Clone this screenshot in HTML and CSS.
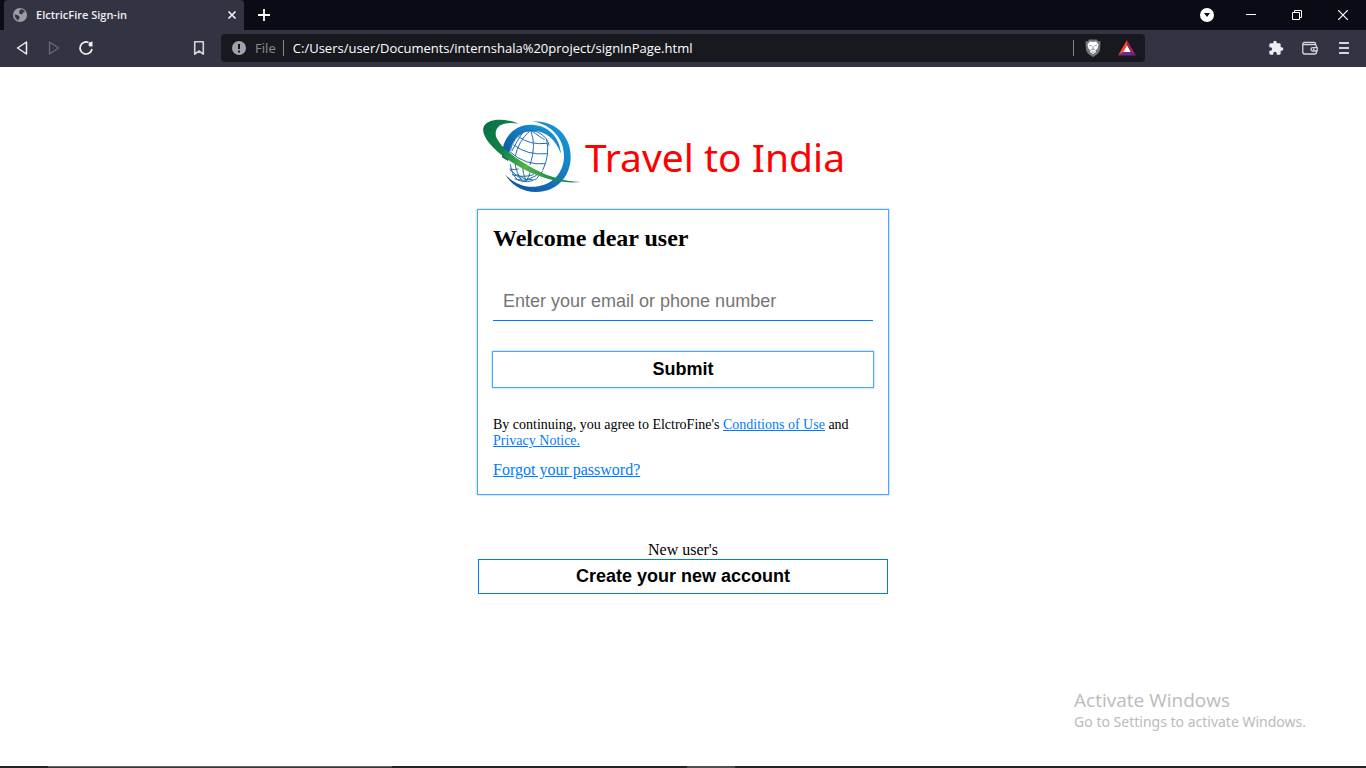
FILE: index.html
```html
<!DOCTYPE html>
<html lang="en">
<head>
<meta charset="utf-8">
<meta name="viewport" content="width=device-width, initial-scale=1">
<title>ElctricFire Sign-in</title>
<link rel="stylesheet" href="styles.css">
</head>
<body>
<header class="browser">
  <div class="tab-strip">
    <div class="tab">
      <svg class="icon-14" viewBox="0 0 14 14" aria-hidden="true"><circle cx="7" cy="7" r="7" fill="#9b9da5"/><path d="M1.500 6.500 4.500 7l2 1.500V10l-1.500 2.500L2.500 10zM7 1.500h3l2 2.500-2 .5-1 2-2-.5L6 4.500z" fill="#323443"/></svg>
      <span class="tab-title">ElctricFire Sign-in</span>
      <button class="plain" aria-label="Close tab"><svg class="icon-10" viewBox="0 0 10 10"><path d="M1.500 1.500l7 7M8.500 1.500l-7 7" stroke="#f0f0f2" stroke-width="1.700"/></svg></button>
    </div>
    <button class="plain new-tab" aria-label="New tab"><svg class="icon-12" viewBox="0 0 12 12"><path d="M6 0v12M0 6h12" stroke="#fff" stroke-width="1.800"/></svg></button>
    <div class="window-controls">
      <button class="plain control" aria-label="Search tabs"><svg class="icon-14" viewBox="0 0 14 14"><circle cx="7" cy="7" r="7" fill="#fff"/><path d="M4 5h6L7 9z" fill="#0b0b15"/></svg></button>
      <button class="plain control" aria-label="Minimize"><svg class="icon-10" viewBox="0 0 10 10"><path d="M0 4.500h10" stroke="#fff"/></svg></button>
      <button class="plain control" aria-label="Restore"><svg class="icon-10" viewBox="0 0 10 10"><path d="M.5 2.500h7v7h-7zM2.500 2.500v-2h7v7h-2" fill="none" stroke="#fff"/></svg></button>
      <button class="plain control" aria-label="Close window"><svg class="icon-10" viewBox="0 0 10 10"><path d="M0 0l10 10M10 0L0 10" stroke="#fff" stroke-width="1.200"/></svg></button>
    </div>
  </div>
  <div class="toolbar">
    <div class="nav">
      <button class="plain" aria-label="Back"><svg class="icon-16" viewBox="0 0 16 16"><path d="M12.500 2v12L3.500 8z" fill="none" stroke="#f0f0f2" stroke-width="1.500" stroke-linejoin="round"/></svg></button>
      <button class="plain" aria-label="Forward"><svg class="icon-16" viewBox="0 0 16 16"><path d="M3.500 2v12l9-6z" fill="none" stroke="#686a76" stroke-width="1.300" stroke-linejoin="round"/></svg></button>
      <button class="plain" aria-label="Reload"><svg class="icon-16" viewBox="0 0 16 16"><path d="M10.500 2.500A6 6 0 1 0 14 9" fill="none" stroke="#f0f0f2" stroke-width="1.700"/><path d="M11 2.500l3.500-1v5h-3q-1.800-1.500-.5-4z" fill="#f0f0f2"/></svg></button>
    </div>
    <button class="plain bookmark" aria-label="Bookmark"><svg class="icon-16" viewBox="0 0 16 16"><path d="M3.700 1.700h8.600v12.500L8 11l-4.300 3.200z" fill="none" stroke="#d5d6da" stroke-width="1.600" stroke-linejoin="round"/></svg></button>
    <div class="address">
      <svg class="icon-14" viewBox="0 0 14 14" aria-hidden="true"><circle cx="7" cy="7" r="7" fill="#a0a3aa"/><path d="M7 3v5M7 9.500v2" stroke="#17191f" stroke-width="2"/></svg>
      <span class="scheme">File</span>
      <input class="url" type="text" aria-label="Address" value="C:/Users/user/Documents/internshala%20project/signInPage.html">
      <span class="divider"></span>
      <button class="plain" aria-label="Shields"><svg class="shield" viewBox="0 0 16 18"><path d="M4 .5h8l1 1.500 2.500.5-.5 8q-.5 4-7 7.500-6.500-3.500-7-7.500l-.5-8L3 2z" fill="#777779"/><path d="M5 2.500l3 .5 3-.5 2.500 3-1 4-2 2 .5 1.500-3 2-3-2 .5-1.500-2-2-1-4z" fill="#fff"/><path d="M4 6l2.500 1M12 6L9.500 7M8 7v3.500M5.700 11 8 10l2.300 1M6.500 13h3" fill="none" stroke="#777779" stroke-width=".8"/></svg></button>
      <button class="plain" aria-label="Rewards"><svg class="rewards" viewBox="0 0 18 16"><path d="M9 0 0 15.500l9-5z" fill="#ff4724"/><path d="M9 0v10.500l9 5z" fill="#9e1f63"/><path d="M0 15.500l9-5 9 5z" fill="#662d91"/><path d="M9 5.500l3.700 6.500H5.300z" fill="#fff"/></svg></button>
    </div>
    <div class="tools">
      <button class="plain" aria-label="Extensions"><svg class="icon-16" viewBox="0 0 24 24"><path d="M20.500 11H19V7a2 2 0 0 0-2-2h-4V3.500a2.500 2.500 0 0 0-5 0V5H4a2 2 0 0 0-2 2v3.800h1.500a2.700 2.700 0 0 1 0 5.400H2V20a2 2 0 0 0 2 2h3.800v-1.500a2.700 2.700 0 0 1 5.400 0V22H17a2 2 0 0 0 2-2v-4h1.500a2.500 2.500 0 0 0 0-5z" fill="#eee"/></svg></button>
      <button class="plain" aria-label="Wallet"><svg class="icon-16" viewBox="0 0 16 16"><path d="M13.500 4.500V3.700q0-1.200-1.500-1.200H2.500Q.8 2.500.8 4v8q0 2 2 2h9.700q2 0 2-2v-1M1 4.700h11.500q2 0 2 2v1M15.200 7.700h-4.400q-1.800 0-1.800 1.600 0 1.700 1.800 1.700h4.400zM11 9.300h1.500" fill="none" stroke="#d5d6da" stroke-width="1.300"/></svg></button>
      <button class="plain" aria-label="Menu"><svg class="icon-16" viewBox="0 0 16 16"><path d="M3 3h10M3 8h10M3 13h10" stroke="#d5d6da" stroke-width="2"/></svg></button>
    </div>
  </div>
</header>

<main class="page">
  <div class="sign-in">
    <div class="brand">
      <svg class="logo" viewBox="39 27 294 225" role="img" aria-label="Globe">
        <defs>
          <linearGradient id="ring" x1="1" y1="0" x2="0" y2="1"><stop offset="0" stop-color="#199fdf"/><stop offset="1" stop-color="#0b4e9b"/></linearGradient>
          <linearGradient id="swoosh" x1="40" y1="60" x2="330" y2="215" gradientUnits="userSpaceOnUse"><stop offset="0" stop-color="#087149"/><stop offset=".25" stop-color="#138346"/><stop offset=".5" stop-color="#54b544"/><stop offset=".75" stop-color="#238f4d"/><stop offset="1" stop-color="#137c57"/></linearGradient>
        </defs>
        <path d="M96 142C94 83 134 43 183 44c51 1 86 36 90 87-17-45-47-69-87-68-42 1-66 32-72 90z" fill="url(#ring)"/>
        <path d="M188 34c70-2 116 46 114 110-2 60-46 103-105 102-42-1-74-22-92-53 25 26 56 40 91 37 50-4 84-40 86-88 2-55-37-98-94-108z" fill="url(#ring)"/>
        <g fill="none" stroke="#2270ae" stroke-width="3">
          <path d="M121 122q8-40 44-58 35-9 62 20 10 14 10 23M230 88q10 48-12 93M121 163q4 30 22 47 30 12 57-4l18-23"/>
          <path d="M182 61q18 45-2 104M180 62q-35 32-44 76M157 69q-16 24-32 55M182 61q30 21 42 28M145 80q35 26 86 20M130 104q42 33 101 27M119 125q48 43 108 36"/>
          <path d="M119 177q16 3 27 0M126 194q33 10 65 0M134 207q25 7 54 1M135 159q4 32 21 52M158 171q0 19 10 41M180 188q-4 15-12 24M120 180l38 31M140 193l32 18M200 196l-33 15"/>
        </g>
        <path d="M146 41C107 24 48 23 40 54c-6 31 43 78 100 112 61 37 131 57 194 50-62-2-115-22-162-51-52-30-97-69-95-96 1-27 34-34 69-28z" fill="url(#swoosh)"/>
      </svg>
      <h1 class="brand-name">Travel to India</h1>
    </div>
    <form class="card">
      <h2 class="welcome">Welcome dear user</h2>
      <input class="field" type="text" aria-label="Email or phone number" placeholder="Enter your email or phone number">
      <button class="submit" type="button">Submit</button>
      <p class="terms">By continuing, you agree to ElctroFine's <a href="#">Conditions of Use</a> and <a href="#">Privacy Notice.</a></p>
      <a class="forgot" href="#">Forgot your password?</a>
    </form>
    <p class="new-user">New user's</p>
    <button class="create" type="button">Create your new account</button>
  </div>
  <aside class="activation">
    <p class="activation-title">Activate Windows</p>
    <p class="activation-text">Go to Settings to activate Windows.</p>
  </aside>
</main>
<footer class="taskbar"><span class="task-search"></span><span class="task-active"></span></footer>
</body>
</html>
```
FILE: styles.css
```css
* { box-sizing: border-box; }
body {
  margin: 0;
  min-height: 100vh;
  display: flex;
  flex-direction: column;
  background: #fff;
  color: #000;
  font-family: "Liberation Serif", "Times New Roman", serif;
}
h1, h2, p { margin: 0; }
svg { display: block; flex: none; }
a { color: #007bff; }
.plain { padding: 0; border: 0; background: none; flex: none; }
.icon-10 { width: 10px; height: 10px; }
.icon-12 { width: 12px; height: 12px; }
.icon-14 { width: 14px; height: 14px; }
.icon-16 { width: 16px; height: 16px; }

.browser { background: #323443; font-family: "Noto Sans", sans-serif; }
.tab-strip { height: 30px; display: flex; background: #0b0b15; }
.tab {
  width: 240px;
  margin-left: 4px;
  padding: 0 7px 0 9px;
  display: flex;
  align-items: center;
  gap: 9px;
  background: #323443;
  border-radius: 4px 4px 0 0;
}
.tab-title {
  flex: 1;
  color: #f0f0f2;
  font: 600 11px/16px "Open Sans", sans-serif;
}
.new-tab { padding: 0 14px; }
.window-controls { margin-left: auto; display: flex; }
.control { width: 46px; display: grid; place-items: center; }
.control:first-child { width: 42px; }
.toolbar { height: 37px; display: flex; align-items: center; padding: 0 14px 1px; }
.nav { display: flex; gap: 16px; }
.bookmark { margin: 0 14px 0 97px; }
.address {
  flex: 1;
  height: 28px;
  padding: 0 9px 0 11px;
  display: flex;
  align-items: center;
  gap: 9px;
  background: #17191f;
  border-radius: 4px;
}
.scheme {
  padding-right: 7px;
  border-right: 1px solid #85878c;
  color: #85878c;
  font-size: 13px;
  line-height: 16px;
}
.url {
  flex: 1;
  min-width: 0;
  padding: 0;
  border: 0;
  background: none;
  color: #fff;
  font: 13px/18px "Open Sans", sans-serif;
}
.divider { width: 1px; height: 16px; background: #85878c; }
.shield { width: 16px; height: 18px; margin-right: 8px; margin-left: 2px; }
.rewards { width: 18px; height: 16px; }
.tools { display: flex; gap: 18px; margin-left: 123px; }

.page { flex: 1; display: flex; flex-direction: column; padding: 0 16px; }
.sign-in { width: 100%; max-width: 410px; margin: 0 auto; padding-top: 52px; }
.brand { display: flex; align-items: center; gap: 4px; padding-left: 5px; }
.logo { width: 98px; height: 75px; }
.brand-name {
  color: #f00;
  font: 400 39px/48px "Noto Sans", sans-serif;
  white-space: nowrap;
}
.card {
  margin-top: 16px;
  padding: 14px 15px 15px;
  display: flex;
  flex-direction: column;
  box-shadow: 0 0 0 1px #4fa4ff, 0 0 2px 1px #80bdff;
}
.welcome { font-size: 24px; line-height: 28px; }
.field {
  height: 40px;
  margin-top: 29px;
  padding: 2px 10px 0;
  border: 0;
  border-bottom: 1px solid #007bff;
  background: #fff;
  font: 18px "Liberation Sans", Arial, sans-serif;
}
.field::placeholder { color: #757575; }
.submit, .create {
  height: 35px;
  padding: 0;
  border: 0;
  background: #fff;
  color: #000;
  font: 700 18px "Liberation Sans", Arial, sans-serif;
}
.submit { margin-top: 31px; box-shadow: 0 0 0 1px #4fa4ff, 0 0 2px 1px #80bdff; }
.terms { margin-top: 30px; font-size: 14px; line-height: 16px; }
.forgot { margin-top: 12px; align-self: flex-start; font-size: 16px; line-height: 18px; }
.new-user { margin-top: 47px; text-align: center; font-size: 16px; line-height: 18px; }
.create { width: 100%; border: 1px solid #007bff; }
.activation {
  align-self: flex-end;
  margin: auto 44px 34px 0;
  color: #bbb;
  font-family: "Noto Sans", sans-serif;
}
.activation-title { font: 19px/24px "Open Sans", sans-serif; }
.activation-text { font-size: 14px; line-height: 20px; }
.taskbar { height: 2px; display: flex; background: #242428; }
.task-search { width: 344px; margin-left: 48px; background: #39393c; border-top: 1px solid #68686b; }
.task-active { width: 48px; margin-left: 295px; background: #515154; }
```
